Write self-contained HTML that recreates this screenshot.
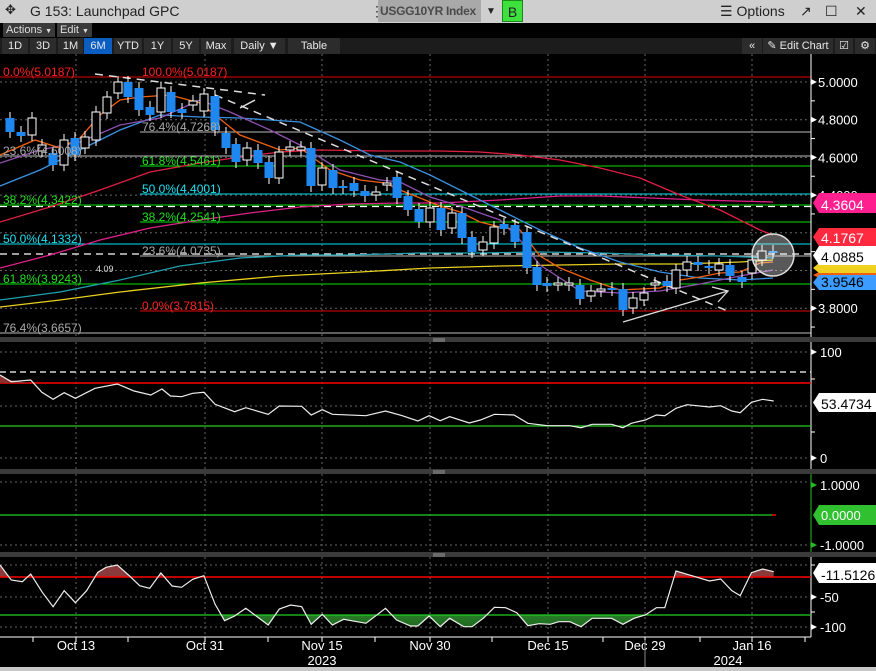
<!DOCTYPE html>
<html><head><meta charset="utf-8">
<style>
*{margin:0;padding:0;box-sizing:border-box}
body{width:876px;height:671px;overflow:hidden;background:#000;font-family:"Liberation Sans",sans-serif;position:relative}
.hdr{position:absolute;left:0;top:0;width:876px;height:23px;background:#cfcfcf;color:#222;font-size:14px}
.hdr span{position:absolute;top:3px;white-space:nowrap}
.bar1{position:absolute;left:0;top:23px;width:876px;height:15px;background:#000}
.btn{position:absolute;height:14px;background:#3a3a3a;color:#ddd;font-size:11px;line-height:14px;padding-left:3px}
.bar2{position:absolute;left:0;top:38px;width:876px;height:16px;background:#1c1c1c}
.tb{position:absolute;top:0;height:16px;background:#2c2c2c;color:#e8e8e8;font-size:11px;line-height:16px;text-align:center}
svg{position:absolute;left:0;top:0}
</style></head><body>
<div class="hdr">
<span style="left:5px;top:2px;font-size:13px">✥</span>
<span style="left:30px">G 153: Launchpad GPC</span>
<span style="left:370px;color:#333">⋮</span>
<span style="left:378px;top:0;width:103px;height:22px;background:#a9a9a9;font-weight:bold;color:#4a4a4a;padding:4px 0 0 2px;font-size:12px;letter-spacing:-0.3px;overflow:hidden">USGG10YR Index</span>
<span style="left:486px;font-size:10px;top:6px">▼</span>
<span style="left:502px;top:0;width:21px;height:22px;background:#3ee03e;border:1px solid #1a8a1a;text-align:center;padding-top:3px">B</span>
<span style="left:720px">☰ Options</span>
<span style="left:800px">↗</span>
<span style="left:825px">☐</span>
<span style="left:855px">✕</span>
</div>
<div class="bar1">
<div class="btn" style="left:3px;width:52px">Actions <span style="font-size:7px">▼</span></div>
<div class="btn" style="left:57px;width:35px">Edit <span style="font-size:7px">▼</span></div>
</div>
<div class="bar2">
<div class="tb" style="left:2px;width:26px">1D</div>
<div class="tb" style="left:30px;width:26px">3D</div>
<div class="tb" style="left:58px;width:25px">1M</div>
<div class="tb" style="left:84px;width:28px;background:#0a5ec2">6M</div>
<div class="tb" style="left:114px;width:28px">YTD</div>
<div class="tb" style="left:144px;width:27px">1Y</div>
<div class="tb" style="left:173px;width:26px">5Y</div>
<div class="tb" style="left:201px;width:30px">Max</div>
<div class="tb" style="left:234px;width:51px">Daily ▼</div>
<div class="tb" style="left:288px;width:52px">Table</div>
<div class="tb" style="left:742px;width:20px">«</div>
<div class="tb" style="left:763px;width:70px">✎ Edit Chart</div>
<div class="tb" style="left:835px;width:18px">☑</div>
<div class="tb" style="left:855px;width:20px">⚙</div>
</div>
<svg id="s" width="876" height="671" style="top:0" font-family="Liberation Sans, sans-serif"></svg>
<script>
const s=document.getElementById('s');let h='';
const R=(x,y,w,ht,f)=>h+=`<rect x="${x}" y="${y}" width="${w}" height="${ht}" fill="${f}"/>`;
const L=(x1,y1,x2,y2,c,w=1,d='')=>h+=`<line x1="${x1}" y1="${y1}" x2="${x2}" y2="${y2}" stroke="${c}" stroke-width="${w}" ${d?`stroke-dasharray="${d}"`:''}/>`;
const P=(pts,c,w=1,d='')=>h+=`<polyline points="${pts.map(p=>p.join(',')).join(' ')}" fill="none" stroke="${c}" stroke-width="${w}" ${d?`stroke-dasharray="${d}"`:''}/>`;
const T=(x,y,t,c,fs=11,a='start')=>h+=`<text x="${x}" y="${y}" fill="${c}" font-size="${fs}" text-anchor="${a}">${t}</text>`;
R(0,337,876,5,'#3a3a3a');R(0,469,876,5,'#3a3a3a');R(0,552,876,5,'#3a3a3a');R(0,667,876,4,'#c8c8c8');
[439].forEach(x=>{[338,470,553].forEach(y=>{L(x-6,y+1,x+6,y+1,'#999');L(x-6,y+3,x+6,y+3,'#999')})});
const gx=[76,205,322,430,548,645,752];
gx.forEach(x=>{L(x,54,x,337,'#666',1,'2,3');L(x,342,x,469,'#666',1,'2,3');L(x,474,x,552,'#666',1,'2,3');L(x,557,x,637,'#666',1,'2,3');});
const yp=p=>82+(5-p)*188.5;
[5,4.8,4.6,4.4,4.2,4.0,3.8].forEach(p=>{let y=yp(p);L(0,y,811,y,'#666',1,'2,3');});
L(0,77,811,77,'#e00000');L(140,132,811,132,'#bbb');L(0,156,811,156,'#bbb');L(140,166,811,166,'#00e000');
L(140,194,811,194,'#00e0f0');L(0,205,811,205,'#00e000');L(0,206.5,811,206.5,'#fff',1.2,'7,5');L(140,222,811,222,'#00e000');
L(0,244,811,244,'#00e0f0');L(0,254,811,254,'#fff',1.2,'7,5');L(140,256,811,256,'#bbb');L(0,284,811,284,'#00e000');
L(140,311,811,311,'#e00000');L(0,333,811,333,'#bbb');
P([[0,307],[60,300],[120,292],[200,283],[280,276],[360,272],[430,268],[500,266],[560,265],[620,264],[680,264],[740,262],[773,260]],'#e8d020',1.3);
P([[0,300],[60,292],[120,280],[180,266],[240,258],[300,255],[350,255],[420,253],[480,253],[540,252],[600,253],[660,255],[720,256],[773,258]],'#20a0b0',1.3);
P([[0,268],[50,255],[100,240],[150,228],[200,220],[250,213],[300,207],[350,204],[400,203],[440,203],[500,200],[560,196],[600,196],[650,198],[700,200],[773,202]],'#e0208a',1.3);
P([[0,222],[50,207],[100,190],[150,172],[200,163],[240,157],[280,152],[320,150],[380,151],[440,151],[480,152],[520,155],[560,160],[600,168],[640,178],[680,195],[720,210],[760,230],[773,235]],'#e02040',1.3);
P([[0,186],[40,170],[80,150],[120,130],[160,115],[200,117],[240,118],[270,120],[300,122],[340,140],[370,155],[400,162],[430,175],[460,190],[500,210],[540,230],[580,248],[620,262],[660,272],[700,278],[740,280],[773,278]],'#3a90e0',1.3);
P([[0,163],[40,150],[80,142],[120,125],[160,118],[200,100],[230,112],[270,130],[300,145],[340,170],[380,180],[400,182],[430,197],[460,206],[500,220],[520,240],[540,265],[580,291],[620,293],[660,291],[700,284],[740,276],[773,270]],'#9050b0',1.3);
P([[0,155],[35,140],[60,148],[80,138],[100,115],[120,100],[140,97],[170,95],[200,103],[215,115],[240,135],[280,150],[300,148],[330,170],[360,180],[385,183],[400,190],[420,198],[440,206],[460,212],[480,222],[500,227],[520,230],[540,256],[560,268],[590,280],[620,290],[660,288],[680,280],[700,277],[720,273],[740,272],[760,263],[773,262]],'#f06010',1.3);
L(95,74,265,95,'#ddd',1.5,'8,6');L(215,95,730,312,'#ddd',1.5,'8,6');L(240,108,255,100,'#ddd',1.5);
L(623,322,728,291,'#ddd',1.3);P([[712,287],[728,291],[718,302]],'#ddd',1.3);
const C=[[10,118,132,0],[21,132,136,0],[32,118,135,1],[42,145,151,1],[53,153,165,0],[64,140,165,1],[75,138,155,0],[85,137,148,1],[96,112,140,1],[107,97,113,1],[118,82,93,1],[128,82,97,0],[139,88,110,0],[150,107,115,0],[161,88,112,1],[171,92,112,0],[182,109,113,0],[193,101,105,1],[204,94,111,1],[215,96,130,0],[226,133,148,0],[236,144,162,0],[247,148,160,1],[258,150,163,0],[269,162,178,0],[279,152,178,1],[290,147,150,1],[301,147,150,1],[311,148,186,0],[322,168,185,1],[333,170,188,0],[343,186,188,0],[354,183,191,0],[365,191,196,0],[376,192,195,1],[387,183,185,1],[397,177,198,0],[408,196,210,0],[419,209,222,0],[430,208,222,1],[441,208,230,0],[452,213,228,1],[462,213,238,0],[472,237,252,0],[483,242,250,1],[494,227,243,1],[504,224,229,0],[515,225,242,0],[527,232,268,0],[537,267,285,0],[547,283,286,0],[558,283,285,1],[569,283,285,1],[580,285,299,0],[591,291,296,1],[601,289,291,1],[612,288,290,0],[623,289,310,0],[633,298,308,1],[644,293,300,1],[655,283,285,1],[667,281,286,0],[676,270,288,1],[687,262,270,1],[698,262,265,0],[709,266,268,0],[719,264,270,1],[730,265,276,0],[742,277,282,0],[752,260,273,1],[762,251,260,1],[773,251,253,0]];
C.forEach(([x,t,b,w])=>{L(x,t-6,x,b+6,'#fff');if(w)h+=`<rect x="${x-4}" y="${t}" width="8" height="${Math.max(b-t,2)}" fill="#000" stroke="#fff"/>`;else R(x-4.5,t,9,Math.max(b-t,2),'#1f88f0');});
h+=`<circle cx="773" cy="255" r="21" fill="rgba(255,255,255,0.35)" stroke="#ddd" stroke-width="1.5"/>`;
const fl=[[3,76,'0.0%(5.0187)','#ff2020'],[142,76,'100.0%(5.0187)','#ff2020'],[142,131,'76.4%(4.7268)','#aaa'],[3,155,'23.6%(4.6008)','#aaa'],[142,165,'61.8%(4.5461)','#20e020'],[142,193,'50.0%(4.4001)','#20e0f0'],[3,204,'38.2%(4.3422)','#20e020'],[142,221,'38.2%(4.2541)','#20e020'],[3,243,'50.0%(4.1332)','#20e0f0'],[142,255,'23.6%(4.0735)','#aaa'],[3,283,'61.8%(3.9243)','#20e020'],[142,310,'0.0%(3.7815)','#ff2020'],[3,332,'76.4%(3.6657)','#aaa']];
fl.forEach(f=>T(f[0],f[1],f[2],f[3],12));T(96,272,'4.09','#ddd',9);
L(811,54,811,337,'#fff');L(811,342,811,469,'#fff');L(811,474,811,552,'#20c020');L(811,557,811,637,'#fff');
[5,4.8,4.6,4.4,3.8].forEach(p=>{let y=yp(p);h+=`<path d="M811 ${y-3}L817 ${y}L811 ${y+3}z" fill="#fff"/>`;T(818,y+5,p.toFixed(4),'#fff',13);});
[4.9,4.7,4.5,4.3,4.1,3.9,3.7].forEach(p=>{let y=yp(p);L(811,y,815,y,'#fff');});
const tag=(y1,y2,bg,tc,t)=>{h+=`<path d="M813 ${(y1+y2)/2}L819 ${y1}H876V${y2}H819z" fill="${bg}"/>`;if(t)T(821,y2-3,t,tc,14);};
tag(272,278,'#f06010','',null);tag(263,273,'#f0d020','',null);tag(246,265,'#fff','#000','4.0885');
tag(193,213,'#ff1f8f','#fff','4.3604');tag(228,246,'#ff2a40','#fff','4.1767');tag(275,290,'#3c9cff','#000','3.9546');
[352,406,458].forEach(y=>L(0,y,811,y,'#666',1,'2,3'));
L(0,372,811,372,'#fff',1.2,'6,4');L(0,383,811,383,'#f00',1.5);L(0,426,811,426,'#20d020',1.2);
const cv=(a)=>a.map(([x,y])=>[(x/1.79).toFixed(1),(y/3+335).toFixed(1)]);
const rsi=cv([[0,120],[20,140],[55,135],[75,172],[95,193],[115,173],[135,190],[170,160],[210,147],[240,168],[270,180],[290,162],[305,183],[325,185],[345,175],[365,172],[385,208],[420,230],[440,218],[480,238],[500,213],[540,214],[557,240],[577,224],[595,238],[655,242],[690,228],[720,242],[748,258],[768,242],[788,257],[805,245],[840,264],[860,255],[885,238],[920,240],[945,265],[980,272],[1020,272],[1040,278],[1060,268],[1095,268],[1115,278],[1130,265],[1155,255],[1175,240],[1190,242],[1210,220],[1230,209],[1270,216],[1290,212],[1310,228],[1325,233],[1345,202],[1365,193],[1385,198]]);
h+=`<polygon points="0,375 0,383 30,383 10,380" fill="#8a3030"/>`;
P(rsi,'#eee',1.2);
[[352,'100'],[458,'0']].forEach(([y,t])=>{h+=`<path d="M811 ${y-3}L817 ${y}L811 ${y+3}z" fill="#fff"/>`;T(820,y+5,t,'#fff',13);});
[379,432].forEach(y=>L(811,y,815,y,'#fff'));
tag(393,412,'#fff','#000','53.4734');
[482,545].forEach(y=>L(0,y,811,y,'#666',1,'2,3'));
L(0,515,772,515,'#20d020',1.2);L(772,515,776,515,'#f00',1.5);
[[485,'1.0000'],[545,'-1.0000']].forEach(([y,t])=>{h+=`<path d="M811 ${y-3}L817 ${y}L811 ${y+3}z" fill="#20c020"/>`;T(820,y+5,t,'#fff',13);});
h+=`<path d="M813 515L819 505H876V525H819z" fill="#30c030"/>`;T(821,520,'0.0000','#fff',13);
[565,597,627].forEach(y=>L(0,y,811,y,'#666',1,'2,3'));
const cc=cv([[0,690],[20,735],[40,740],[55,717],[75,770],[95,815],[115,767],[135,803],[155,767],[175,712],[190,697],[210,690],[230,720],[250,752],[268,760],[288,714],[308,753],[325,757],[345,733],[365,722],[385,808],[402,857],[420,843],[440,820],[480,870],[500,822],[520,810],[540,815],[557,868],[577,838],[595,870],[615,853],[655,865],[690,820],[710,855],[735,873],[748,873],[768,843],[788,875],[805,850],[830,875],[845,875],[865,850],[885,817],[905,818],[925,833],[945,872],[965,866],[985,868],[1000,860],[1020,860],[1040,875],[1060,850],[1095,850],[1115,868],[1135,850],[1155,840],[1175,818],[1190,818],[1210,708],[1230,718],[1270,738],[1290,732],[1310,767],[1325,782],[1345,713],[1365,702],[1385,710]]);
const ps=cc.map(p=>p.join(',')).join(' '),xe=cc[cc.length-1][0];
h+=`<defs><clipPath id="cg"><rect x="0" y="615" width="811" height="25"/></clipPath><clipPath id="cr"><rect x="0" y="556" width="811" height="21"/></clipPath>
<linearGradient id="gg" x1="0" y1="0" x2="0" y2="1"><stop offset="0" stop-color="#50c050"/><stop offset="1" stop-color="#1f6a1f"/></linearGradient></defs>`;
h+=`<polygon clip-path="url(#cg)" points="0,615 ${ps} ${xe},615" fill="url(#gg)"/>`;
h+=`<polygon clip-path="url(#cr)" points="0,577 ${ps} ${xe},577" fill="#8a3a3a"/>`;
L(0,577,811,577,'#f00',1.5);L(0,615,811,615,'#20d020',1.2);
P(cc,'#eee',1.2);
[[597,'-50'],[627,'-100']].forEach(([y,t])=>{h+=`<path d="M811 ${y-3}L817 ${y}L811 ${y+3}z" fill="#fff"/>`;T(820,y+5,t,'#fff',13);});
[565,612].forEach(y=>L(811,y,815,y,'#fff'));
tag(563,583,'#fff','#000','-11.5126');
L(0,637,811,637,'#fff');
[33,76,128,205,268,322,375,430,492,548,603,645,700,752,805].forEach(x=>L(x,637,x,642,'#fff'));
[[76,'Oct 13'],[205,'Oct 31'],[322,'Nov 15'],[430,'Nov 30'],[548,'Dec 15'],[645,'Dec 29'],[752,'Jan 16']].forEach(([x,t])=>T(x,650,t,'#fff',13,'middle'));
T(322,665,'2023','#fff',13,'middle');T(728,665,'2024','#fff',13,'middle');L(645,640,645,667,'#888');
s.innerHTML=h;
</script>
</body></html>
